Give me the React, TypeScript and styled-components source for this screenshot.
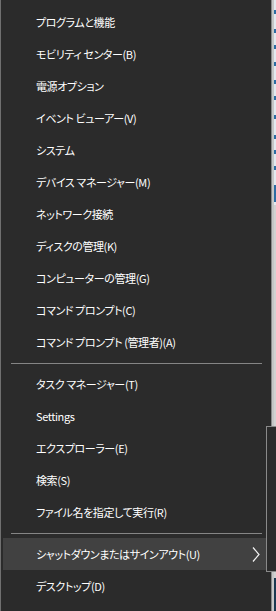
import styled, { createGlobalStyle } from 'styled-components';

const GlobalStyle = createGlobalStyle`
  html, body {
    margin: 0;
    padding: 0;
    background: #d4d4d4;
  }
  * {
    box-sizing: border-box;
  }
`;

type Entry = { label: string; sep?: boolean; active?: boolean; sub?: boolean };

const items: Entry[] = [
  { label: 'プログラムと機能' },
  { label: 'モビリティ センター(B)' },
  { label: '電源オプション' },
  { label: 'イベント ビューアー(V)' },
  { label: 'システム' },
  { label: 'デバイス マネージャー(M)' },
  { label: 'ネットワーク接続' },
  { label: 'ディスクの管理(K)' },
  { label: 'コンピューターの管理(G)' },
  { label: 'コマンド プロンプト(C)' },
  { label: 'コマンド プロンプト (管理者)(A)' },
  { label: '', sep: true },
  { label: 'タスク マネージャー(T)' },
  { label: 'Settings' },
  { label: 'エクスプローラー(E)' },
  { label: '検索(S)' },
  { label: 'ファイル名を指定して実行(R)' },
  { label: '', sep: true },
  { label: 'シャットダウンまたはサインアウト(U)', active: true, sub: true },
  { label: 'デスクトップ(D)' },
];

// bits of the window behind the menu
const marks = [10, 29, 45, 62, 80, 96, 115, 135, 150, 166];

export default function App() {
  return (
    <>
      <GlobalStyle />
      <Screen>
        <Menu>
          {items.map((it, i) =>
            it.sep ? (
              <Separator key={i} />
            ) : (
              <Item key={i} $active={it.active}>
                <span>{it.label}</span>
                {it.sub && (
                  <svg width="8" height="15" viewBox="0 0 8 15">
                    <path d="M1 0.5 L7 7.5 L1 14.5" fill="none" stroke="#f2f2f2" strokeWidth="1.2" />
                  </svg>
                )}
              </Item>
            )
          )}
        </Menu>
        <Backdrop>
          <WindowTop>
            {marks.map((y, i) => (
              <Mark key={i} style={{ top: y }} />
            ))}
            <Block />
          </WindowTop>
          <WindowMid />
          <Taskbar />
        </Backdrop>
        <SubMenu />
      </Screen>
    </>
  );
}

const Screen = styled.div`
  position: relative;
  display: flex;
  width: 276px;
  height: 611px;
  overflow: hidden;
`;

const Menu = styled.div`
  display: flex;
  flex-direction: column;
  width: 272px;
  flex-shrink: 0;
  height: 100%;
  padding-top: 6px;
  background: #2b2b2b;
  border-left: 1px solid #707070;
  border-right: 1px solid #8a8a8a;
  font-family: 'Noto Sans CJK JP', sans-serif;
  font-feature-settings: 'palt';
  font-size: 11px;
  letter-spacing: -0.4px;
  color: #ffffff;
`;

const Item = styled.div<{ $active?: boolean }>`
  display: flex;
  align-items: center;
  justify-content: space-between;
  height: 32px;
  margin: 0 1px 0 2px;
  padding: 0 10px 0 33px;
  background: ${p => (p.$active ? '#414141' : 'transparent')};
  white-space: nowrap;
  span {
    line-height: 1;
  }
  svg {
    display: block;
  }
`;

const Separator = styled.div`
  height: 10px;
  display: flex;
  align-items: center;
  padding: 0 9px 0 10px;
  &::before {
    content: '';
    flex: 1;
    height: 1px;
    background: #858585;
  }
`;

const Backdrop = styled.div`
  flex: 1;
  display: flex;
  flex-direction: column;
  border-left: 2px solid #c6c6c6;
`;

const WindowTop = styled.div`
  position: relative;
  height: 205px;
  background: #e3e9ef;
`;

const Mark = styled.div`
  position: absolute;
  left: 0;
  right: 0;
  height: 4px;
  background: #2d6ca2;
`;

const Block = styled.div`
  position: absolute;
  left: 0;
  right: 0;
  top: 185px;
  height: 17px;
  background: #2d6ca2;
`;

const WindowMid = styled.div`
  flex: 1;
  background: #d2d2d2;
`;

const Taskbar = styled.div`
  height: 33px;
  background: #1b3850;
`;

const SubMenu = styled.div`
  position: absolute;
  left: 266px;
  top: 426px;
  width: 20px;
  height: 146px;
  background: #2b2b2b;
  border: 1px solid #8a8a8a;
`;
